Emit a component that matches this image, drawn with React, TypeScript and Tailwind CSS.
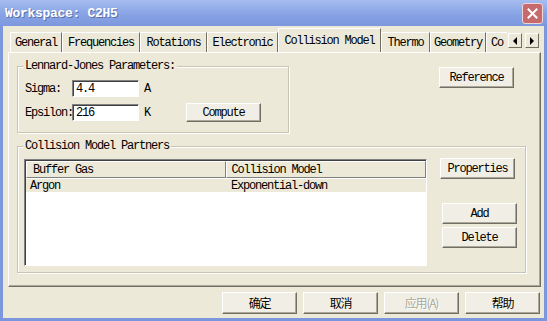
const mono = "font-['Liberation_Mono',monospace] text-[12px] tracking-[-1.2px] leading-none";
const cjk = "font-['Noto_Sans_CJK_SC',sans-serif] text-[12px] leading-none";

const Btn = ({ children, className = "", disabled = false }: { children: React.ReactNode; className?: string; disabled?: boolean }) => (
  <div
    className={`flex items-center justify-center bg-[#f1efe5] border-t border-l border-white border-r border-b border-r-[#716f64] border-b-[#716f64] shadow-[inset_-1px_-1px_0_#aca899] ${disabled ? "text-[#aca899]" : "text-black"} ${className}`}
  >
    {children}
  </div>
);

const Field = ({ value }: { value: string }) => (
  <div className="w-[67px] h-[17px] bg-white border-t border-l border-t-[#808080] border-l-[#808080] border-r border-b border-white shadow-[inset_1px_1px_0_#404040] flex items-center pl-[3px]">
    {value}
  </div>
);

const tabs = [
  { label: "General", w: "w-[52px]" },
  { label: "Frequencies", w: "w-[78px]" },
  { label: "Rotations", w: "w-[67px]" },
  { label: "Electronic", w: "w-[71px]" },
];
const tabsAfter = [
  { label: "Thermo", w: "w-[49px]" },
  { label: "Geometry", w: "w-[56px]" },
];

const Tab = ({ label, w }: { label: string; w: string }) => (
  <div className={`${w} h-[20px] flex items-center justify-center border-t border-l border-white border-r border-r-[#716f64] bg-[#ece9d8] shrink-0`}>
    {label}
  </div>
);

const Arrow = ({ dir }: { dir: "l" | "r" }) => (
  <div className="w-[14px] h-[15px] bg-[#ece9d8] border-t border-l border-white border-r border-b border-r-[#716f64] border-b-[#716f64] flex items-center justify-center">
    <svg width="6" height="8" viewBox="0 0 6 8">
      {dir === "l" ? <path d="M5 0 L1 4 L5 8 Z" fill="#000" /> : <path d="M1 0 L5 4 L1 8 Z" fill="#000" />}
    </svg>
  </div>
);

const App = () => {
  return (
    <div className={`w-[547px] h-[321px] flex flex-col overflow-hidden ${mono}`}>
      {/* title bar */}
      <div className="h-[26px] shrink-0 flex items-center justify-between pl-[5px] pr-[4px] bg-gradient-to-b from-[#a6bdf0] via-[#8aa5e6] to-[#7c97dc]">
        <span className="font-['Liberation_Mono',monospace] font-bold text-[13px] tracking-[-0.3px] text-white [text-shadow:1px_1px_0_#5a6fa8]">
          Workspace: C2H5
        </span>
        <div className="w-[21px] h-[21px] rounded-[3px] bg-[#c66a6e] border border-[#ecd6d6] flex items-center justify-center">
          <svg width="11" height="11" viewBox="0 0 11 11">
            <path d="M1.5 1.5 L9.5 9.5 M9.5 1.5 L1.5 9.5" stroke="#fff" strokeWidth="2" strokeLinecap="square" />
          </svg>
        </div>
      </div>

      {/* body */}
      <div className="flex-1 flex flex-col bg-[#ece9d8] border-l-[3px] border-r-[3px] border-b-[3px] border-[#7d97dc]">
        {/* tabs */}
        <div className="mt-[2px] h-[24px] flex items-end ml-[7px] relative z-10">
          <div className="w-[497px] overflow-hidden flex items-end h-[25px]">
            {tabs.map((t) => (
              <Tab key={t.label} {...t} />
            ))}
            <div className="w-[103px] h-[25px] mb-[-1px] flex items-center justify-center border-t border-l border-white border-r border-r-[#716f64] bg-[#ece9d8] shrink-0 pb-[1px]">
              Collision Model
            </div>
            {tabsAfter.map((t) => (
              <Tab key={t.label} {...t} />
            ))}
            <div className="w-[60px] h-[20px] flex items-center pl-[4px] border-t border-l border-white bg-[#ece9d8] shrink-0">
              Co
            </div>
          </div>
          <div className="flex gap-[3px] ml-[1px] mb-[4px]">
            <Arrow dir="l" />
            <Arrow dir="r" />
          </div>
        </div>

        {/* tab page */}
        <div className="ml-[5px] w-[533px] h-[235px] border-t border-l border-white border-r border-b border-r-[#716f64] border-b-[#716f64] shadow-[inset_-1px_-1px_0_#aca899] flex flex-col">
          <div className="flex mt-[13px] ml-[8px]">
            {/* Lennard-Jones */}
            <div className="relative w-[272px] h-[67px] border border-[#c8c5b4] shadow-[inset_1px_1px_0_#fff,1px_1px_0_#fff]">
              <span className="absolute -top-[7px] left-[5px] px-[2px] bg-[#ece9d8]">Lennard-Jones Parameters:</span>
              <div className="pt-[13px] pl-[7px] flex flex-col gap-[6px]">
                <div className="flex items-center h-[17px]">
                  <span className="w-[47px] whitespace-nowrap">Sigma:</span>
                  <Field value="4.4" />
                  <span className="ml-[5px]">A</span>
                </div>
                <div className="flex items-center h-[19px]">
                  <span className="w-[47px] whitespace-nowrap">Epsilon:</span>
                  <Field value="216" />
                  <span className="ml-[5px] w-[6px]">K</span>
                  <Btn className="ml-[36px] w-[75px] h-[19px]">Compute</Btn>
                </div>
              </div>
            </div>
            <Btn className="ml-[150px] mt-[1px] w-[75px] h-[21px]">Reference</Btn>
          </div>

          {/* Collision Model Partners */}
          <div className="relative mt-[13px] ml-[8px] w-[509px] h-[127px] border border-[#c8c5b4] shadow-[inset_1px_1px_0_#fff,1px_1px_0_#fff] flex">
            <span className="absolute -top-[7px] left-[5px] px-[2px] bg-[#ece9d8]">Collision Model Partners</span>
            <div className="ml-[6px] mt-[12px] w-[403px] h-[107px] bg-white border-t border-l border-t-[#808080] border-l-[#808080] border-r border-b border-white shadow-[inset_1px_1px_0_#404040] flex flex-col pl-[1px] pt-[1px]">
              <div className="flex h-[17px]">
                <div className="w-[200px] flex items-center pl-[6px] bg-[#ece9d8] border-t border-l border-white border-r border-b border-r-[#808080] border-b-[#808080]">
                  Buffer Gas
                </div>
                <div className="w-[201px] flex items-center pl-[5px] bg-[#ece9d8] border-t border-l border-white border-r border-b border-r-[#808080] border-b-[#808080]">
                  Collision Model
                </div>
              </div>
              <div className="flex h-[13px] mt-[1px] bg-[#ece9d8] items-center">
                <span className="w-[200px] pl-[4px]">Argon</span>
                <span className="pl-[5px]">Exponential-down</span>
              </div>
            </div>
            <div className="ml-[13px] mt-[11px] flex flex-col">
              <Btn className="w-[75px] h-[21px]">Properties</Btn>
              <Btn className="ml-[2px] mt-[24px] w-[75px] h-[21px]">Add</Btn>
              <Btn className="ml-[2px] mt-[3px] w-[75px] h-[21px]">Delete</Btn>
            </div>
          </div>
        </div>

        {/* bottom buttons */}
        <div className={`flex justify-end gap-[6px] pr-[4px] mt-[5px] ${cjk}`}>
          <Btn className="w-[75px] h-[22px]">确定</Btn>
          <Btn className="w-[75px] h-[22px]">取消</Btn>
          <Btn disabled className="w-[75px] h-[22px] [text-shadow:1px_1px_0_#fff]">应用(A)</Btn>
          <Btn className="w-[75px] h-[22px]">帮助</Btn>
        </div>
      </div>
    </div>
  );
};

export default App;
